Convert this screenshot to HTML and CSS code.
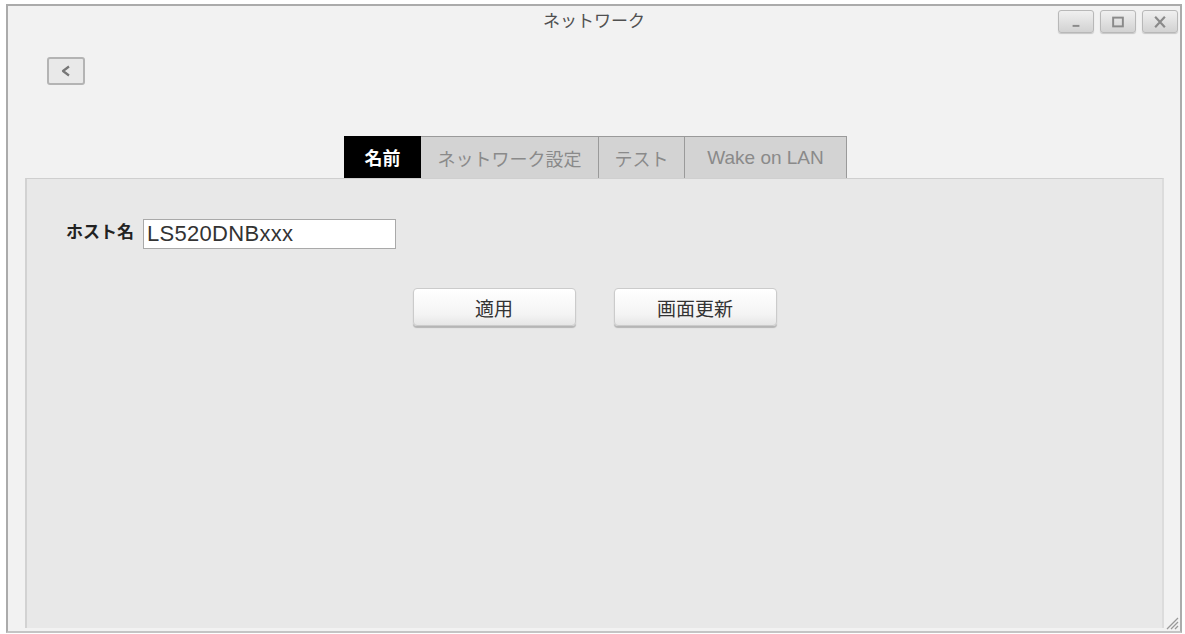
FILE: index.html
```html
<!DOCTYPE html>
<html lang="ja">
<head>
<meta charset="utf-8">
<title>ネットワーク</title>
<link rel="stylesheet" href="styles.css">
</head>
<body>
<div class="window">
  <div class="titlebar">
    <div class="spacer"></div>
    <div class="title">ネットワーク</div>
    <div class="controls">
      <div class="ctl"><svg width="35" height="22" viewBox="0 0 35 22"><rect x="14" y="14" width="7" height="2" fill="#8a8a8a"/></svg></div>
      <div class="ctl"><svg width="35" height="22" viewBox="0 0 35 22"><rect x="12.5" y="6.5" width="10" height="9" fill="none" stroke="#8a8a8a" stroke-width="2"/></svg></div>
      <div class="ctl"><svg width="35" height="22" viewBox="0 0 35 22"><path d="M12.5 5.5 L22.5 16.5 M22.5 5.5 L12.5 16.5" stroke="#8a8a8a" stroke-width="2.2" fill="none"/></svg></div>
    </div>
  </div>
  <div class="backrow">
    <div class="back"><svg width="34" height="24" viewBox="0 0 34 24"><path d="M20 7.5 L14 12 L20 16.5" stroke="#777" stroke-width="2.2" fill="none" stroke-linejoin="round"/></svg></div>
  </div>
  <div class="tabs">
    <div class="tab active t1">名前</div>
    <div class="tab t2">ネットワーク設定</div>
    <div class="tab t3">テスト</div>
    <div class="tab t4">Wake on LAN</div>
  </div>
  <div class="panel">
    <div class="hostrow">
      <span class="label">ホスト名</span>
      <div class="input">LS520DNBxxx</div>
    </div>
    <div class="buttons">
      <div class="btn">適用</div>
      <div class="btn">画面更新</div>
    </div>
  </div>
  <svg class="grip" width="14" height="14" viewBox="0 0 14 14"><path d="M13 2 L2 13 M13 6 L6 13 M13 10 L10 13" stroke="#999" stroke-width="1.3"/></svg>
</div>
</body>
</html>
```

FILE: styles.css
```css
* { box-sizing: border-box; }
html, body { margin: 0; padding: 0; background: #ffffff; }
body {
  width: 1185px;
  height: 634px;
  overflow: hidden;
  font-family: "Noto Sans CJK JP", "Liberation Sans", sans-serif;
}
.window {
  position: relative;
  margin: 4px 0 0 6px;
  width: 1176px;
  height: 629px;
  border: 2px solid #ababab;
  border-bottom-color: #c4c4c4;
  background: #f2f2f2;
  display: flex;
  flex-direction: column;
}
.titlebar {
  height: 34px;
  display: grid;
  grid-template-columns: 1fr auto 1fr;
  align-items: start;
}
.title {
  font-size: 17px;
  color: #505050;
  line-height: 26px;
  padding-top: 1px;
}
.controls {
  display: flex;
  justify-content: flex-end;
  gap: 6px;
  padding: 4px 2px 0 0;
}
.ctl {
  width: 36px;
  height: 23px;
  border: 1px solid #b8b8b8;
  border-radius: 3px;
  background: linear-gradient(#f0f0f0, #d2d2d2);
  box-shadow: 0 1px 1px rgba(0,0,0,0.18);
  display: flex;
  align-items: center;
  justify-content: center;
}
.ctl svg { display: block; }
.backrow {
  padding: 17px 0 0 39px;
  height: 96px;
}
.back {
  width: 38px;
  height: 28px;
  border: 2px solid #b4b4b4;
  border-radius: 3px;
  background: #e9e9e9;
  display: flex;
  align-items: center;
  justify-content: center;
}
.tabs {
  display: flex;
  justify-content: center;
  height: 42px;
  padding-left: 3px;
}
.tab {
  height: 42px;
  display: flex;
  align-items: center;
  justify-content: center;
  background: #d3d3d3;
  border: 1px solid #9a9a9a;
  border-left: none;
  border-bottom: none;
  color: #8a8a8a;
  font-size: 18px;
}
.tab.active {
  background: #000000;
  color: #ffffff;
  font-weight: bold;
  border: none;
}
.t1 { width: 77px; }
.t2 { width: 178px; }
.t3 { width: 86px; }
.t4 { width: 162px; font-family: "Liberation Sans", sans-serif; font-size: 19px; }
.panel {
  margin: 0 16px 3px 17px;
  flex: 1;
  background: #e8e8e8;
  border-top: 1px solid #cfcfcf;
  border-left: 2px solid #d2d2d2;
  border-right: 2px solid #dcdcdc;
  padding: 40px 0 0 39px;
}
.hostrow {
  display: flex;
  align-items: center;
  gap: 9px;
}
.label {
  font-size: 17px;
  font-weight: bold;
  color: #222;
  position: relative;
  top: -4px;
}
.input {
  width: 253px;
  height: 30px;
  background: #ffffff;
  border: 1px solid #a9a9a9;
  font-family: "Liberation Sans", sans-serif;
  font-size: 22px;
  color: #333;
  line-height: 28px;
  padding-left: 3px;
  letter-spacing: 0.3px;
}
.buttons {
  display: flex;
  justify-content: center;
  gap: 38px;
  margin-top: 39px;
  margin-left: -39px;
}
.btn {
  width: 163px;
  height: 38px;
  border: 1px solid #cbcbcb;
  border-radius: 4px;
  background: linear-gradient(#ffffff, #f4f4f4 70%, #e6e6e6);
  box-shadow: 0 2px 1px rgba(0,0,0,0.22);
  display: flex;
  align-items: center;
  justify-content: center;
  font-size: 19px;
  color: #333;
}
.grip {
  position: absolute;
  right: 1px;
  bottom: 1px;
}
```
